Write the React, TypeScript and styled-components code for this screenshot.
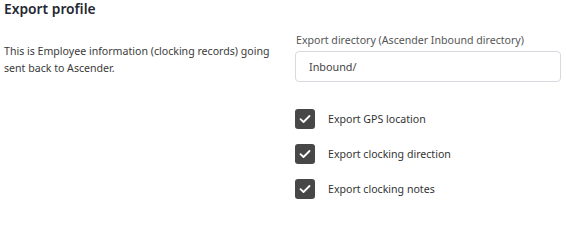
import React, { useState } from 'react';
import styled, { createGlobalStyle } from 'styled-components';

const GlobalStyle = createGlobalStyle`
  body {
    margin: 0;
    background: #ffffff;
    font-family: 'Noto Sans', 'Open Sans', sans-serif;
    color: #333333;
  }
`;

const Page = styled.div`
  padding: 0 5px 0 4px;
`;

const Title = styled.h2`
  margin: 0;
  font-size: 13.8px;
  line-height: 17px;
  font-weight: 600;
  color: #1f2733;
`;

const Columns = styled.div`
  display: grid;
  grid-template-columns: 291px 266px;
  margin-top: 15px;
`;

const Description = styled.p`
  margin: 11px 0 0;
  font-size: 10.6px;
  line-height: 17px;
  color: #3a3a3a;
`;

const Settings = styled.div`
  display: flex;
  flex-direction: column;
`;

const Label = styled.label`
  display: block;
  font-size: 10.6px;
  line-height: 16px;
  color: #555555;
  padding-left: 1px;
  margin-bottom: 3px;
`;

const TextInput = styled.input`
  box-sizing: border-box;
  width: 266px;
  height: 31px;
  padding: 0 13px;
  border: 1px solid #d6d9dd;
  border-radius: 4px;
  font-family: inherit;
  font-size: 10.8px;
  color: #444444;
  outline: none;
`;

const Options = styled.div`
  display: flex;
  flex-direction: column;
  gap: 15px;
  margin-top: 27px;
`;

const OptionRow = styled.label`
  display: flex;
  align-items: center;
  gap: 13px;
  cursor: pointer;
  font-size: 10.6px;
  color: #333333;
`;

const Box = styled.span<{ $checked: boolean }>`
  width: 20px;
  height: 20px;
  border-radius: 3px;
  background: ${(p) => (p.$checked ? '#474747' : '#ffffff')};
  border: ${(p) => (p.$checked ? 'none' : '1px solid #9a9a9a')};
  box-sizing: border-box;
  display: flex;
  align-items: center;
  justify-content: center;
  flex-shrink: 0;
`;

const options = [
  { id: 'gps', text: 'Export GPS location' },
  { id: 'direction', text: 'Export clocking direction' },
  { id: 'notes', text: 'Export clocking notes' },
];

function App() {
  const [directory, setDirectory] = useState('Inbound/');
  const [checked, setChecked] = useState<Record<string, boolean>>({
    gps: true,
    direction: true,
    notes: true,
  });

  const toggle = (id: string) => {
    setChecked((prev) => ({ ...prev, [id]: !prev[id] }));
  };

  return (
    <Page>
      <GlobalStyle />
      <Title>Export profile</Title>
      <Columns>
        <Description>
          This is Employee information (clocking records) going
          <br />
          sent back to Ascender.
        </Description>
        <Settings>
          <Label htmlFor="export-dir">Export directory (Ascender Inbound directory)</Label>
          <TextInput
            id="export-dir"
            value={directory}
            onChange={(e) => setDirectory(e.target.value)}
          />
          <Options>
            {options.map((option) => (
              <OptionRow key={option.id} onClick={() => toggle(option.id)}>
                <Box $checked={checked[option.id]}>
                  {checked[option.id] && (
                    <svg width="12" height="10" viewBox="0 0 12 10">
                      <path
                        d="M1.5 5.2 L4.5 8 L10.5 2"
                        fill="none"
                        stroke="#ffffff"
                        strokeWidth="1.8"
                        strokeLinecap="round"
                        strokeLinejoin="round"
                      />
                    </svg>
                  )}
                </Box>
                {option.text}
              </OptionRow>
            ))}
          </Options>
        </Settings>
      </Columns>
    </Page>
  );
}

export default App;
